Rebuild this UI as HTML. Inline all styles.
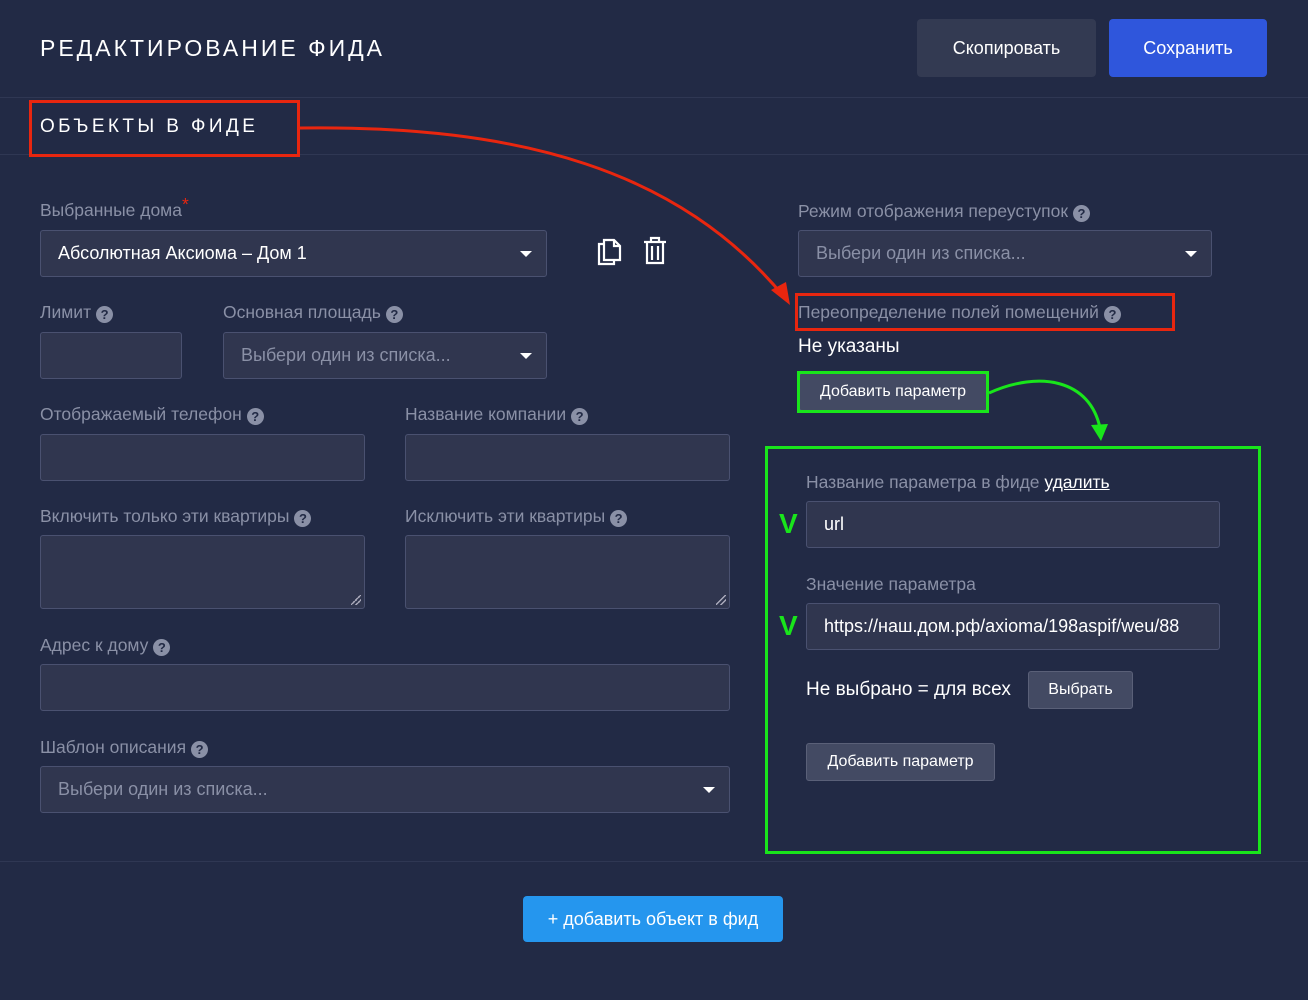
<!DOCTYPE html>
<html><head><meta charset="utf-8"><style>
*{box-sizing:border-box;margin:0;padding:0}
body{width:1308px;height:1000px;background:#222a45;font-family:"Liberation Sans",Arial,sans-serif;position:relative;overflow:hidden;color:#fff}
.a{position:absolute}
.lbl{position:absolute;color:#8a90a6;font-size:17.5px;white-space:nowrap;line-height:20px}
.q{display:inline-block;width:17px;height:17px;border-radius:50%;background:#8a90a6;color:#222a45;font-size:13px;font-weight:bold;text-align:center;line-height:17px;vertical-align:-1px;margin-left:5px}
.in{position:absolute;background:#30364f;border:1px solid #4a5170;border-radius:3px;font-size:18px;line-height:44px;padding-left:17px;white-space:nowrap;overflow:hidden}
.ph{color:#8a90a6}
.car{position:absolute;right:14px;top:20px;width:0;height:0;border-left:6px solid transparent;border-right:6px solid transparent;border-top:6px solid #fff}
.btn{position:absolute;background:#434a63;border:1px solid #5a6078;border-radius:3px;color:#fff;font-size:16px;text-align:center}
.hr{position:absolute;left:0;width:1308px;height:1px;background:#2f3753}
.grip{position:absolute;right:3px;bottom:3px;width:10px;height:10px;background:linear-gradient(135deg,transparent 45%,#aab 45%,#aab 55%,transparent 55%,transparent 70%,#aab 70%,#aab 80%,transparent 80%)}
</style></head><body>
<div class="a" style="left:40px;top:34px;font-size:23px;letter-spacing:3px;line-height:28px">РЕДАКТИРОВАНИЕ ФИДА</div>
<div class="a" style="left:917px;top:19px;width:179px;height:58px;background:#333a52;border-radius:4px;font-size:18px;text-align:center;line-height:58px">Скопировать</div>
<div class="a" style="left:1109px;top:19px;width:158px;height:58px;background:#2f56dc;border-radius:4px;font-size:18px;text-align:center;line-height:58px">Сохранить</div>
<div class="hr" style="top:97px"></div>
<div class="hr" style="top:154px"></div>
<div class="a" style="left:40px;top:116px;font-size:19px;letter-spacing:3.4px;line-height:22px">ОБЪЕКТЫ В ФИДЕ</div>
<div class="a" style="left:29px;top:100px;width:271px;height:57px;border:3px solid #e8260f"></div>

<div class="lbl" style="left:40px;top:200px">Выбранные дома<span style="color:#e8260f;position:relative;top:-6px">*</span></div>
<div class="in" style="left:40px;top:230px;width:507px;height:47px">Абсолютная Аксиома – Дом 1<div class="car"></div></div>
<svg class="a" style="left:594px;top:235px" width="30" height="32" viewBox="0 0 30 32" fill="none" stroke="#fff" stroke-width="2.2"><path d="M10 5h10l6 6v14H10z"/><path d="M20 5v6h6"/><path d="M10 9H5v20h15v-4"/></svg>
<svg class="a" style="left:641px;top:235px" width="28" height="32" viewBox="0 0 28 32" fill="none" stroke="#fff" stroke-width="2.2"><path d="M3 7h22M10 7V3h8v4M6 7v21h16V7M11 11v14M17 11v14"/></svg>

<div class="lbl" style="left:40px;top:302px">Лимит<span class="q">?</span></div>
<div class="in" style="left:40px;top:332px;width:142px;height:47px"></div>
<div class="lbl" style="left:223px;top:302px">Основная площадь<span class="q">?</span></div>
<div class="in ph" style="left:223px;top:332px;width:324px;height:47px">Выбери один из списка...<div class="car"></div></div>

<div class="lbl" style="left:40px;top:404px">Отображаемый телефон<span class="q">?</span></div>
<div class="in" style="left:40px;top:434px;width:325px;height:47px"></div>
<div class="lbl" style="left:405px;top:404px">Название компании<span class="q">?</span></div>
<div class="in" style="left:405px;top:434px;width:325px;height:47px"></div>

<div class="lbl" style="left:40px;top:506px">Включить только эти квартиры<span class="q">?</span></div>
<div class="in" style="left:40px;top:535px;width:325px;height:74px"><div class="grip"></div></div>
<div class="lbl" style="left:405px;top:506px">Исключить эти квартиры<span class="q">?</span></div>
<div class="in" style="left:405px;top:535px;width:325px;height:74px"><div class="grip"></div></div>

<div class="lbl" style="left:40px;top:635px">Адрес к дому<span class="q">?</span></div>
<div class="in" style="left:40px;top:664px;width:690px;height:47px"></div>
<div class="lbl" style="left:40px;top:737px">Шаблон описания<span class="q">?</span></div>
<div class="in ph" style="left:40px;top:766px;width:690px;height:47px">Выбери один из списка...<div class="car"></div></div>

<div class="lbl" style="left:798px;top:201px">Режим отображения переуступок<span class="q">?</span></div>
<div class="in ph" style="left:798px;top:230px;width:414px;height:47px">Выбери один из списка...<div class="car"></div></div>
<div class="lbl" style="left:798px;top:302px">Переопределение полей помещений<span class="q">?</span></div>
<div class="a" style="left:795px;top:293px;width:380px;height:38px;border:3px solid #e8260f"></div>
<div class="a" style="left:798px;top:336px;font-size:19px;line-height:22px">Не указаны</div>
<div class="btn" style="left:799px;top:373px;width:188px;height:38px;line-height:36px">Добавить параметр</div>
<div class="a" style="left:797px;top:371px;width:192px;height:42px;border:3px solid #19e51b"></div>

<div class="a" style="left:765px;top:446px;width:496px;height:408px;border:3px solid #19e51b"></div>
<div class="lbl" style="left:806px;top:472px">Название параметра в фиде <span style="color:#fff;text-decoration:underline">удалить</span></div>
<div class="a" style="left:779px;top:508px;color:#19e51b;font-size:28px;font-weight:bold">V</div>
<div class="in" style="left:806px;top:501px;width:414px;height:47px">url</div>
<div class="lbl" style="left:806px;top:574px">Значение параметра</div>
<div class="a" style="left:779px;top:610px;color:#19e51b;font-size:28px;font-weight:bold">V</div>
<div class="in" style="left:806px;top:603px;width:414px;height:47px;padding-right:16px"><span style="display:block;width:380px;overflow:hidden">https://наш.дом.рф/axioma/198aspif/weu/88</span></div>
<div class="a" style="left:806px;top:680px;font-size:19px;line-height:20px">Не выбрано = для всех</div>
<div class="btn" style="left:1028px;top:671px;width:105px;height:38px;line-height:36px">Выбрать</div>
<div class="btn" style="left:806px;top:743px;width:189px;height:38px;line-height:36px">Добавить параметр</div>

<div class="hr" style="top:861px"></div>
<div class="a" style="left:523px;top:896px;width:260px;height:46px;background:#2596ee;border-radius:4px;font-size:18px;text-align:center;line-height:46px">+ добавить объект в фид</div>

<svg class="a" style="left:0;top:0" width="1308" height="1000">
<path d="M300 128 C520 125 680 170 785 298" fill="none" stroke="#e8260f" stroke-width="3"/>
<path d="M771 290 L790 305 L786 282 Z" fill="#e8260f"/>
<path d="M989 393 C1040 370 1090 380 1100 428" fill="none" stroke="#19e51b" stroke-width="3"/>
<path d="M1091 425 L1101 441 L1108 424 Z" fill="#19e51b"/>
</svg>
</body></html>
